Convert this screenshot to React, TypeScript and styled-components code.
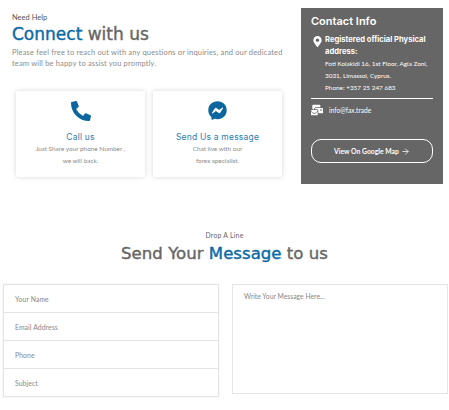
import { FC } from "react";
import styled, { createGlobalStyle } from "styled-components";
import { FaPhoneAlt, FaFacebookMessenger, FaMapMarkerAlt, FaMailBulk } from "react-icons/fa";
import { FiArrowRight } from "react-icons/fi";

const GlobalStyle = createGlobalStyle`
  html, body {
    margin: 0;
    padding: 0;
    background: #fff;
  }
  body {
    font-family: "Lato", "Liberation Sans", sans-serif;
  }
`;

type ContactCard = {
  title: string;
  lines: string[];
  icon: "phone" | "messenger";
};

const cards: ContactCard[] = [
  { title: "Call us", lines: ["Just Share your phone Number ,", "we will back."], icon: "phone" },
  { title: "Send Us a message", lines: ["Chat live with our", "forex specialist."], icon: "messenger" },
];

const fields = ["Your Name", "Email Address", "Phone", "Subject"];

const App: FC = () => (
  <>
    <GlobalStyle />
    <Page>
      <TopRow>
        <Connect>
          <Eyebrow>Need Help</Eyebrow>
          <MainTitle>
            <Blue>Connect</Blue> with us
          </MainTitle>
          <Intro>
            Please feel free to reach out with any questions or inquiries, and our dedicated
            <br />
            team will be happy to assist you promptly.
          </Intro>
          <Cards>
            {cards.map((card) => (
              <Card key={card.title}>
                <CardIcon>
                  {card.icon === "phone" ? <FaPhoneAlt size={20} /> : <FaFacebookMessenger size={19} />}
                </CardIcon>
                <CardTitle>{card.title}</CardTitle>
                {card.lines.map((line) => (
                  <CardLine key={line}>{line}</CardLine>
                ))}
              </Card>
            ))}
          </Cards>
        </Connect>
        <InfoPanel>
          <InfoTitle>Contact Info</InfoTitle>
          <AddressRow>
            <FaMapMarkerAlt size={11} color="#fff" />
            <div>
              <AddressHead>Registered official Physical address:</AddressHead>
              <AddressLine>Foti Kolakidi 16, 1st Floor, Agia Zoni,</AddressLine>
              <AddressLine>3031, Limassol, Cyprus.</AddressLine>
              <AddressLine>Phone: +357 25 247 683</AddressLine>
            </div>
          </AddressRow>
          <Divider />
          <MailRow>
            <FaMailBulk size={12} color="#fff" />
            info@fax.trade
          </MailRow>
          <MapButton>
            View On Google Map <FiArrowRight size={9} />
          </MapButton>
        </InfoPanel>
      </TopRow>
      <MessageHead>
        <DropLine>Drop A Line</DropLine>
        <MessageTitle>
          Send Your <Blue>Message</Blue> to us
        </MessageTitle>
      </MessageHead>
      <FormRow>
        <FieldBox>
          {fields.map((field) => (
            <FieldRow key={field}>{field}</FieldRow>
          ))}
        </FieldBox>
        <MessageBox>Write Your Message Here...</MessageBox>
      </FormRow>
    </Page>
  </>
);

export default App;

const Page = styled.div`
  width: 449px;
  height: 410px;
  overflow: hidden;
  padding-top: 8px;
  box-sizing: border-box;
`;

const TopRow = styled.div`
  display: flex;
  height: 176px;
`;

const Connect = styled.div`
  width: 301px;
  padding: 5px 0 0 12px;
  box-sizing: border-box;
`;

const Eyebrow = styled.div`
  font-size: 7.5px;
  line-height: 9px;
  color: #555;
`;

const MainTitle = styled.h1`
  margin: 1px 0 0;
  font-family: "DejaVu Sans", sans-serif;
  font-size: 17px;
  line-height: 23px;
  font-weight: 400;
  color: #666;
  -webkit-text-stroke: 0.4px currentColor;
`;

const Blue = styled.span`
  color: #0a6aa6;
`;

const Intro = styled.p`
  margin: 1px 0 0;
  font-size: 7.5px;
  line-height: 11px;
  letter-spacing: 0.17px;
  color: #8c8c8c;
  white-space: nowrap;
`;

const Cards = styled.div`
  display: flex;
  gap: 8px;
  margin: 22px 0 0 4px;
`;

const Card = styled.div`
  width: 129px;
  height: 86px;
  padding-top: 10px;
  box-sizing: border-box;
  background: #fff;
  text-align: center;
  border-radius: 2px;
  box-shadow: 0 0 5px rgba(0, 0, 0, 0.16);
`;

const CardIcon = styled.div`
  height: 20px;
  color: #0b669f;
  margin-bottom: 10px;
`;

const CardTitle = styled.div`
  font-family: "Inter", sans-serif;
  font-size: 8.5px;
  line-height: 12px;
  letter-spacing: 0.2px;
  color: #2a80b4;
`;

const CardLine = styled.div`
  font-size: 6.4px;
  line-height: 11.5px;
  color: #8a8a8a;
`;

const InfoPanel = styled.div`
  width: 142px;
  height: 176px;
  padding: 6px 10px 0 10px;
  box-sizing: border-box;
  background: #666;
  color: #fff;
`;

const InfoTitle = styled.div`
  font-family: "Inter", sans-serif;
  font-size: 11px;
  line-height: 14px;
  font-weight: 600;
`;

const AddressRow = styled.div`
  display: flex;
  gap: 2px;
  margin: 6px 0 0 1px;
  svg {
    flex: none;
    margin-top: 2px;
  }
`;

const AddressHead = styled.div`
  font-family: "Inter", sans-serif;
  font-size: 7.6px;
  line-height: 12px;
  font-weight: 700;
`;

const AddressLine = styled.div`
  font-size: 6.4px;
  line-height: 12px;
  white-space: nowrap;
`;

const Divider = styled.div`
  height: 1px;
  background: #fff;
  margin-top: 4px;
  width: 122px;
`;

const MailRow = styled.div`
  display: flex;
  align-items: center;
  gap: 6px;
  margin-top: 5px;
  font-size: 6.6px;
  line-height: 12px;
`;

const MapButton = styled.div`
  display: flex;
  align-items: center;
  justify-content: center;
  gap: 2px;
  width: 122px;
  height: 24px;
  margin-top: 23px;
  border: 1px solid #fff;
  border-radius: 10px;
  box-sizing: border-box;
  font-size: 6.8px;
  font-weight: 700;
`;

const MessageHead = styled.div`
  text-align: center;
  margin-top: 47px;
`;

const DropLine = styled.div`
  font-size: 6.8px;
  line-height: 9px;
  letter-spacing: 0.25px;
  color: #666;
`;

const MessageTitle = styled.h2`
  margin: 4px 0 0;
  font-family: "DejaVu Sans", sans-serif;
  font-size: 16.6px;
  line-height: 20px;
  font-weight: 400;
  color: #666;
  -webkit-text-stroke: 0.4px currentColor;
`;

const FormRow = styled.div`
  display: flex;
  align-items: flex-start;
  gap: 13px;
  margin: 20px 0 0 3px;
`;

const FieldBox = styled.div`
  width: 216px;
  box-sizing: border-box;
  border: 1px solid #e4e4e4;
  box-shadow: 0 0 2px rgba(0, 0, 0, 0.08);
`;

const FieldRow = styled.div`
  height: 28px;
  padding-left: 11px;
  display: flex;
  align-items: center;
  box-sizing: border-box;
  font-size: 6.8px;
  letter-spacing: 0.1px;
  color: #888;
  border-bottom: 1px solid #e4e4e4;
  &:last-child {
    height: 27px;
    border-bottom: 0;
  }
`;

const MessageBox = styled.div`
  width: 216px;
  height: 110px;
  box-sizing: border-box;
  padding: 6px 11px;
  border: 1px solid #e4e4e4;
  font-size: 6.8px;
  line-height: 10px;
  color: #888;
`;
